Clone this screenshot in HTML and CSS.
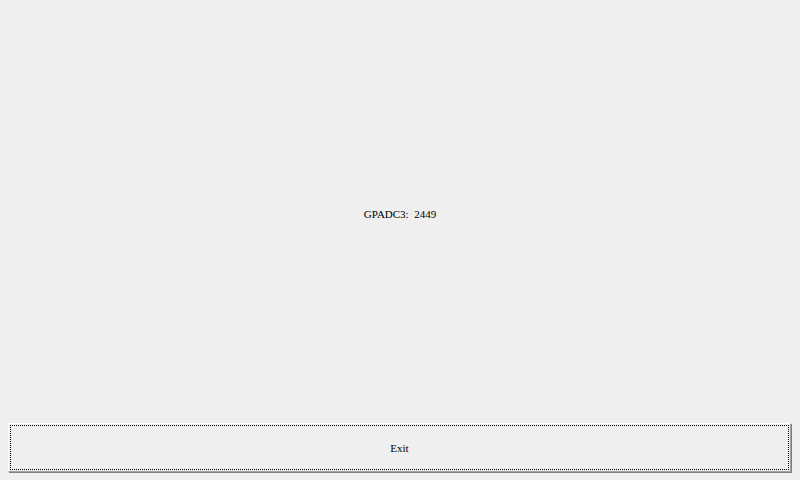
FILE: index.html
```html
<!DOCTYPE html>
<html>
<head>
<meta charset="utf-8">
<link rel="stylesheet" href="styles.css">
</head>
<body>
<div class="app">
  <div class="display"><span class="reading">GPADC3:&nbsp; 2449</span></div>
  <button class="exit"><span class="focus">Exit</span></button>
</div>
</body>
</html>
```
FILE: styles.css
```css
html, body {
  margin: 0;
  padding: 0;
  background: #efefef;
  height: 100%;
}
body {
  padding: 8px;
  box-sizing: border-box;
  font-family: "Liberation Serif", "Times New Roman", serif;
  font-size: 11px;
  color: #000;
}
.app {
  display: flex;
  flex-direction: column;
  height: 100%;
}
.display {
  flex: 1;
  display: flex;
  align-items: center;
  justify-content: center;
  padding-bottom: 4px;
}
.exit {
  height: 49px;
  padding: 1px;
  margin: 0;
  background: #efefef;
  border: none;
  border-top: 1px solid #ffffff;
  border-left: 1px solid #ffffff;
  border-right: 1px solid #a0a0a0;
  border-bottom: 1px solid #a0a0a0;
  box-shadow: 1px 1px 0 #7f7f7f;
  font-family: inherit;
  font-size: 11px;
  color: #000;
  display: flex;
  width: calc(100% - 1px);
}
.focus {
  flex: 1;
  display: flex;
  align-items: center;
  justify-content: center;
  border: 1px dotted #000;
}
```
